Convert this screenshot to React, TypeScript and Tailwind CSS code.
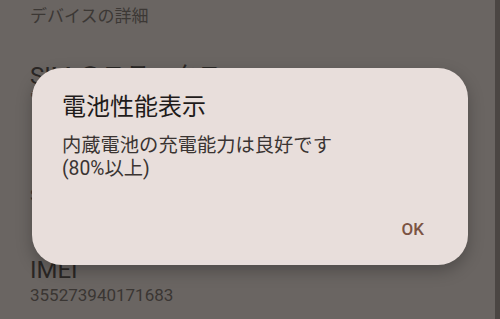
import React from "react";

const font = { fontFamily: 'Roboto, "Noto Sans CJK JP", "Noto Sans", sans-serif' };

export default function App() {
  return (
    <div className="relative w-[500px] h-[319px] overflow-hidden flex bg-[#6a6562]" style={font}>
      <div className="flex-1 flex flex-col pl-[30px] text-[#2f2b29]">
        <div className="mt-[5px] text-[17px] leading-[22px] text-[#3c3835]">デバイスの詳細</div>
        <div className="mt-[34px] text-[24px] leading-[30px] text-[#2a2725]">SIM のステータス</div>
        <div className="mt-[-4px] text-[17px] leading-[24px] text-[#3a3633]">電話番号</div>
        <div className="mt-[40px] text-[24px] leading-[30px] text-[#2a2725]">ー</div>
        <div className="mt-[2px] text-[17px] leading-[24px] text-[#3a3633]">SIM</div>
        <div className="mt-[48px] text-[24px] leading-[30px] text-[#2a2725]">IMEI</div>
        <div className="mt-[-2px] text-[17px] leading-[24px] text-[#3a3633]">355273940171683</div>
      </div>
      <div className="w-[5px] bg-[#4b4643]" />

      <div className="absolute left-[32px] top-[68px] w-[436px] h-[197px] rounded-[30px] bg-[#e8dedb] shadow-[0_6px_16px_rgba(0,0,0,0.25)] flex flex-col pl-[30px] pr-[30px] pt-[23px]">
        <div className="text-[24px] leading-[32px] text-[#1f1b1a]">電池性能表示</div>
        <div className="mt-[11px] text-[19.3px] leading-[23px] text-[#3a3432]">
          内蔵電池の充電能力は良好です
          <br />
          (80%以上)
        </div>
        <div className="mt-auto mb-[24px] flex justify-end">
          <div className="mr-[14px] text-[17px] leading-[24px] font-medium text-[#7b5343]">OK</div>
        </div>
      </div>
    </div>
  );
}
